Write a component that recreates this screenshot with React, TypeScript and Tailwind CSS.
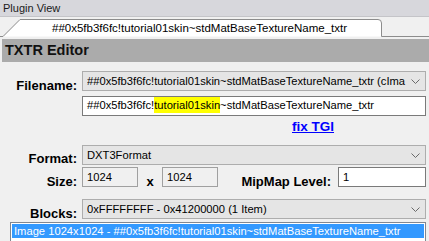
const Chevron = () => (
  <svg width="9" height="5" viewBox="0 0 9 5" className="shrink-0">
    <polyline points="0.5,0.5 4.5,4.5 8.5,0.5" fill="none" stroke="#6a6a6a" strokeWidth="1" />
  </svg>
);

function Combo({ text }: { text: string }) {
  return (
    <div className="h-[20px] flex items-center border border-[#adadad] bg-[#e5e5e5] pl-[4px] pr-[5px]">
      <span className="flex-1 overflow-hidden whitespace-nowrap">{text}</span>
      <Chevron />
    </div>
  );
}

function Label({ text, pad }: { text: string; pad: string }) {
  return (
    <div className={`w-[77px] shrink-0 text-right font-bold text-[13px] leading-[15px] whitespace-nowrap ${pad}`}>
      {text}
    </div>
  );
}

export default function App() {
  return (
    <div className="w-[429px] h-[241px] overflow-hidden bg-[#f0f0f0] text-black font-['Liberation_Sans',Arial,sans-serif] text-[11.2px]">
      {/* Plugin View title */}
      <div className="h-[17px] bg-[#d7d7dc] border-b border-[#c4c4c8] pl-[3px] text-[11px] leading-[16px] text-[#1a1a1a]">
        Plugin View
      </div>

      {/* tab strip */}
      <div className="relative h-[22px]">
        <svg width="429" height="22" viewBox="0 0 429 22" className="absolute inset-0">
          <path d="M3,19.5 L20,2.5 H378 Q381.5,2.5 381.5,6 V19.5 Z" fill="#ffffff" />
          <path
            d="M0,19.5 H3 L20,2.5 H378 Q381.5,2.5 381.5,6 V19.5 H429"
            fill="none"
            stroke="#8c8c8c"
            strokeWidth="1"
          />
        </svg>
        <div className="relative pl-[52px] text-[11.5px] leading-[22px] whitespace-nowrap">
          ##0x5fb3f6fc!tutorial01skin~stdMatBaseTextureName_txtr
        </div>
      </div>

      {/* editor header */}
      <div className="ml-[2px] h-[23px] bg-[#ababab] pl-[3px] font-bold text-[14.5px] leading-[23px] text-[#111]">
        TXTR Editor
      </div>

      <div className="flex flex-col pr-[3px]">
        {/* Filename */}
        <div className="flex gap-[5px] mt-[9px]">
          <Label text="Filename:" pad="pt-[7px]" />
          <div className="flex-1 flex flex-col">
            <Combo text="##0x5fb3f6fc!tutorial01skin~stdMatBaseTextureName_txtr (cIma" />
            <div className="mt-[5px] h-[20px] flex items-center border border-[#7a7a7a] bg-white pl-[4px] pb-[2px] whitespace-nowrap">
              ##0x5fb3f6fc!<span className="bg-[#ffff00]">tutorial01skin</span>~stdMatBaseTextureName_txtr
            </div>
            <div className="mt-[3px] h-[15px] pl-[210px] leading-[15px]">
              <span className="font-bold text-[13.5px] text-[#0000ff] underline">fix TGI</span>
            </div>
          </div>
        </div>

        {/* Format */}
        <div className="flex gap-[5px] mt-[11px] h-[20px]">
          <Label text="Format:" pad="pt-[6px]" />
          <div className="flex-1">
            <Combo text="DXT3Format" />
          </div>
        </div>

        {/* Size */}
        <div className="flex gap-[5px] mt-[2px] h-[20px]">
          <Label text="Size:" pad="pt-[7px]" />
          <div className="flex-1 flex">
            <div className="w-[56px] h-[20px] flex items-center border border-[#a0a0a0] bg-[#f0f0f0] pl-[4px]">1024</div>
            <div className="w-[24px] pt-[9px] text-center font-bold text-[13px] leading-[12px]">x</div>
            <div className="w-[56px] h-[20px] flex items-center border border-[#a0a0a0] bg-[#f0f0f0] pl-[4px]">1024</div>
            <div className="w-[120px] pr-[7px] pt-[7px] text-right font-bold text-[13px] leading-[15px] whitespace-nowrap">
              MipMap Level:
            </div>
            <div className="flex-1 h-[20px] flex items-center border border-[#7a7a7a] bg-white pl-[4px]">1</div>
          </div>
        </div>

        {/* Blocks */}
        <div className="flex gap-[5px] mt-[12px] h-[20px]">
          <Label text="Blocks:" pad="pt-[7px]" />
          <div className="flex-1">
            <Combo text="0xFFFFFFFF - 0x41200000 (1 Item)" />
          </div>
        </div>

        {/* list */}
        <div className="ml-[10px] mt-[3px] h-[30px] border border-[#828790] bg-white p-[1px]">
          <div className="h-[14px] bg-[#3399ff] text-white pl-[2px] leading-[14px] whitespace-nowrap overflow-hidden">
            Image 1024x1024 - ##0x5fb3f6fc!tutorial01skin~stdMatBaseTextureName_txtr
          </div>
        </div>
      </div>
    </div>
  );
}
